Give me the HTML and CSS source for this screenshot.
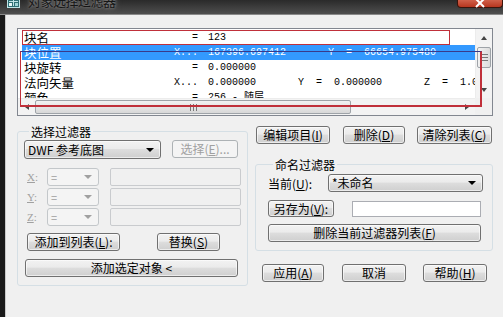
FILE: index.html
```html
<!DOCTYPE html>
<html lang="zh-CN">
<head>
  <meta charset="UTF-8">
  <title>对象选择过滤器</title>
  <link rel="stylesheet" href="styles.css">
</head>
<body>
  <div class="window">

    <!-- Title bar (cut off at the top of the shot) -->
    <header class="titlebar">
      <svg class="app-icon" width="13" height="13" viewBox="0 0 13 13">
        <rect x="0.5" y="0.5" width="12" height="12" fill="#2d6f74" stroke="#bfe3e6"/>
        <rect x="2" y="2" width="3" height="3" fill="#e8f6f7"/>
        <rect x="8" y="2" width="3" height="3" fill="#e8f6f7"/>
        <rect x="2" y="8" width="3" height="3" fill="#e8f6f7"/>
        <rect x="8" y="8" width="3" height="3" fill="#9fd3d6"/>
        <path d="M6.5 2v9M2 6.5h9" stroke="#bfe3e6" stroke-width="1"/>
      </svg>
      <span class="title">对象选择过滤器</span>
      <span class="close-btn">
        <svg width="12" height="10" viewBox="0 0 12 10"><path d="M2 0l8 8M10 0L2 8" stroke="#fff" stroke-width="2"/></svg>
      </span>
    </header>

    <div class="frame">
      <div class="frame-edge"></div>
      <div class="dialog">

        <!-- Filter list -->
        <div class="listbox">
          <div class="list-main">
            <div class="rows">
              <div class="row"><span class="c-name">块名</span><span class="c-op">=</span><span class="c-val">123</span></div>
              <div class="row selected"><span class="c-name">块位置</span><span class="c-op">X...</span><span class="c-val">167396.697412       Y  =  66654.975480</span></div>
              <div class="row"><span class="c-name">块旋转</span><span class="c-op">=</span><span class="c-val">0.000000</span></div>
              <div class="row"><span class="c-name">法向矢量</span><span class="c-op">X...</span><span class="c-val">0.000000       Y  =  0.000000       Z  =  1.000000</span></div>
              <div class="row"><span class="c-name">颜色</span><span class="c-op">=</span><span class="c-val">256 - 随层</span></div>
            </div>
            <div class="vscroll">
              <div class="sb-arrow"><span class="tri tri-up"></span></div>
              <div class="v-thumb"><span class="grip-h"></span></div>
              <div class="sb-fill"></div>
              <div class="sb-arrow"><span class="tri tri-down"></span></div>
            </div>
          </div>
          <div class="list-bottom">
            <div class="hscroll">
              <div class="sb-arrow-h"><span class="tri tri-left"></span></div>
              <div class="h-thumb"><span class="grip-v"></span></div>
              <div class="sb-fill"></div>
              <div class="sb-arrow-h"><span class="tri tri-right"></span></div>
            </div>
            <div class="sb-corner"></div>
          </div>
          <!-- red annotation boxes drawn over the screenshot -->
          <div class="mark mark-1"></div>
          <div class="mark mark-2"></div>
        </div>

        <div class="lower">

          <!-- Left: select filter -->
          <fieldset class="group group-select">
            <legend>选择过滤器</legend>
            <div class="sel-row">
              <div class="combo combo-dwf">DWF 参考底图<span class="arrow"></span></div>
              <button class="btn btn-pick" disabled>选择(<u>E</u>)...</button>
            </div>
            <div class="coord-row">
              <span class="coord-label"><u>X</u>:</span>
              <div class="combo-off">=<span class="arrow"></span></div>
              <div class="text-off"></div>
            </div>
            <div class="coord-row">
              <span class="coord-label"><u>Y</u>:</span>
              <div class="combo-off">=<span class="arrow"></span></div>
              <div class="text-off"></div>
            </div>
            <div class="coord-row">
              <span class="coord-label"><u>Z</u>:</span>
              <div class="combo-off">=<span class="arrow"></span></div>
              <div class="text-off"></div>
            </div>
            <div class="add-row">
              <button class="btn btn-add">添加到列表(<u>L</u>):</button>
              <button class="btn btn-replace">替换(<u>S</u>)</button>
            </div>
            <button class="btn btn-addsel">添加选定对象 &lt;</button>
          </fieldset>

          <!-- Right column -->
          <div class="right-col">
            <div class="edit-row">
              <button class="btn btn-edit">编辑项目(<u>I</u>)</button>
              <button class="btn btn-del">删除(<u>D</u>)</button>
              <button class="btn btn-clear">清除列表(<u>C</u>)</button>
            </div>

            <fieldset class="group group-named">
              <legend>命名过滤器</legend>
              <div class="cur-row">
                <span class="cur-label">当前(<u>U</u>):</span>
                <div class="combo combo-name">*未命名<span class="arrow"></span></div>
              </div>
              <div class="save-row">
                <button class="btn btn-save">另存为(<u>V</u>):</button>
                <div class="text-on"></div>
              </div>
              <button class="btn btn-delfilter">删除当前过滤器列表(<u>F</u>)</button>
            </fieldset>

            <div class="footer-row">
              <button class="btn btn-apply">应用(<u>A</u>)</button>
              <button class="btn btn-cancel">取消</button>
              <button class="btn btn-help">帮助(<u>H</u>)</button>
            </div>
          </div>
        </div>
      </div>
    </div>
  </div>
</body>
</html>
```

FILE: styles.css
```css
/* Base */
* {
  margin: 0;
  padding: 0;
  box-sizing: border-box;
}

body {
  width: 503px;
  height: 317px;
  overflow: hidden;
  background: #1d1d1d;
  font-family: "Noto Sans CJK SC", "Liberation Sans", sans-serif;
  font-size: 12px;
  color: #000;
}

u {
  text-decoration: underline;
  text-underline-offset: 1px;
}

.window {
  width: 503px;
  height: 317px;
  display: flex;
  flex-direction: column;
}

/* Title bar */
.titlebar {
  height: 15px;
  flex: none;
  display: flex;
  align-items: flex-start;
  background: linear-gradient(#2a2a2a, #4f4f4f);
  border-bottom: 1px solid #8a8a8a;
  position: relative;
  overflow: hidden;
}

.app-icon {
  margin: -5px 0 0 7px;
  flex: none;
}

.title {
  margin: -6px 0 0 8px;
  font-size: 13px;
  line-height: 14px;
  color: #161616;
  text-shadow: 0 0 3px #9a9a9a, 0 0 6px #777;
  letter-spacing: -0.5px;
}

.close-btn {
  margin-left: auto;
  width: 46px;
  height: 8px;
  display: flex;
  justify-content: center;
  align-items: flex-end;
  background: linear-gradient(#d0604a, #b8361f);
  border: 1px solid #3b140c;
  border-top: none;
  border-radius: 0 0 4px 4px;
}

.close-btn svg {
  display: block;
  margin-bottom: -2px;
}

/* Frame */
.frame {
  flex: 1;
  display: flex;
}

.frame-edge {
  width: 5px;
  background: #1a1a1a;
}

.dialog {
  flex: 1;
  background: #f0f0f0;
  border-left: 1px solid #c9c9c9;
  padding: 13px 10px 0 11px;
  position: relative;
}

/* List box */
.listbox {
  width: 476px;
  height: 88px;
  border: 1px solid #828790;
  background: #fff;
  position: relative;
}

.list-main {
  display: flex;
  height: 69px;
}

.rows {
  width: 457px;
  height: 69px;
  overflow: hidden;
  padding-top: 1px;
}

.row {
  height: 15px;
  margin-left: 4px;
  display: flex;
  align-items: center;
  white-space: pre;
  line-height: 15px;
}

.row.selected {
  background: #3399ff;
  color: #fff;
}

.c-name {
  width: 148px;
  padding-left: 2px;
  font-size: 12.5px;
  flex: none;
}

.c-op,
.c-val {
  font-family: "Liberation Mono", monospace;
  font-size: 10px;
}

.c-op {
  width: 28px;
  text-align: right;
  flex: none;
}

.c-val {
  margin-left: 10px;
}

/* Scrollbars */
.vscroll {
  width: 17px;
  height: 69px;
  display: flex;
  flex-direction: column;
  background: #f3f3f3;
  border-left: 1px solid #ececec;
}

.sb-arrow {
  height: 17px;
  display: flex;
  align-items: center;
  justify-content: center;
}

.sb-fill {
  flex: 1;
}

.v-thumb {
  height: 21px;
  margin: 1px 1px 0;
  border: 1px solid #9ea3a8;
  border-radius: 2px;
  background: linear-gradient(90deg, #f2f2f2, #dcdcdc);
  display: flex;
  align-items: center;
  justify-content: center;
}

.grip-h {
  width: 7px;
  height: 7px;
  background: repeating-linear-gradient(#777 0 1px, transparent 1px 3px);
}

.list-bottom {
  display: flex;
  height: 17px;
}

.hscroll {
  width: 457px;
  display: flex;
  background: #f3f3f3;
  border-top: 1px solid #ececec;
}

.sb-arrow-h {
  width: 17px;
  display: flex;
  align-items: center;
  justify-content: center;
}

.h-thumb {
  width: 316px;
  margin: 1px 0;
  border: 1px solid #9ea3a8;
  border-radius: 2px;
  background: linear-gradient(#f2f2f2, #d8d8d8);
  display: flex;
  align-items: center;
  justify-content: center;
}

.grip-v {
  width: 7px;
  height: 7px;
  background: repeating-linear-gradient(90deg, #777 0 1px, transparent 1px 3px);
}

.sb-corner {
  width: 17px;
  background: #f0f0f0;
}

.tri {
  width: 0;
  height: 0;
  border: 3px solid transparent;
}

.tri-up { border-bottom: 4px solid #444; border-top-width: 0; }
.tri-down { border-top: 4px solid #444; border-bottom-width: 0; }
.tri-left { border-right: 4px solid #444; border-left-width: 0; }
.tri-right { border-left: 4px solid #444; border-right-width: 0; }

/* Red annotation boxes */
.mark {
  position: absolute;
  border: 1px solid #c0303a;
  pointer-events: none;
}

.mark-1 {
  left: 4px;
  top: 1px;
  width: 428px;
  height: 15px;
}

.mark-2 {
  left: 2px;
  top: 22px;
  width: 462px;
  height: 56px;
  border-width: 1px 2px 2px 1px;
  border-color: #3a3a8a #c0303a #c0303a #c0303a;
}

/* Lower part */
.lower {
  display: flex;
  gap: 7px;
}

.group {
  border: 1px solid #d5dfe5;
  border-radius: 3px;
  min-width: 0;
}

.group legend {
  line-height: 15px;
  padding: 0 2px;
  margin-left: 5px;
}

.group-select {
  width: 231px;
  margin-top: 8px;
  height: 162px;
  padding: 1px 0 0 6px;
}

.sel-row {
  display: flex;
  gap: 11px;
}

/* Buttons and combo boxes, Win7 look */
.btn,
.combo {
  height: 18px;
  border: 1px solid #707070;
  border-radius: 3px;
  background: linear-gradient(#f2f2f2 0%, #ebebeb 45%, #dddddd 50%, #cfcfcf 100%);
  font-family: "Noto Sans CJK SC", "Liberation Sans", sans-serif;
  font-size: 12px;
  line-height: 16px;
  color: #000;
  white-space: nowrap;
  box-shadow: inset 0 0 0 1px rgba(255, 255, 255, 0.6);
}

.btn:disabled {
  border-color: #adb2b5;
  background: #f4f4f4;
  color: #a0a0a0;
  box-shadow: none;
}

.combo {
  display: flex;
  align-items: center;
  padding-left: 3px;
  position: relative;
}

.arrow {
  margin-left: auto;
  margin-right: 6px;
  width: 0;
  height: 0;
  border-left: 4px solid transparent;
  border-right: 4px solid transparent;
  border-top: 4px solid #000;
}

.combo-dwf {
  width: 137px;
  height: 19px;
}

.btn-pick {
  width: 66px;
}

.coord-row {
  display: flex;
  align-items: center;
  height: 18px;
  margin-top: 2px;
}

.sel-row + .coord-row {
  margin-top: 9px;
}

.coord-label {
  width: 23px;
  padding-left: 3px;
  color: #a0a0a0;
  font-family: "Liberation Serif", serif;
  font-size: 11px;
}

.combo-off {
  width: 52px;
  height: 18px;
  border: 1px solid #c3c7ca;
  border-radius: 3px;
  background: #f4f4f4;
  color: #a0a0a0;
  display: flex;
  align-items: center;
  padding-left: 3px;
  font-size: 11px;
}

.combo-off .arrow {
  border-top-color: #a0a0a0;
  margin-right: 6px;
}

.text-off {
  width: 131px;
  height: 18px;
  margin-left: 11px;
  border: 1px solid #c9cbce;
  border-radius: 2px;
  background: #f0f0f0;
}

.add-row {
  display: flex;
  gap: 37px;
  margin: 7px 0 0 3px;
}

.btn-add { width: 93px; }
.btn-replace { width: 63px; }

.btn-addsel {
  display: block;
  width: 213px;
  margin: 8px 0 0 1px;
}

/* Right column */
.right-col {
  width: 238px;
}

.edit-row {
  display: flex;
  margin: 10px 0 0 1px;
  gap: 13px;
}

.btn-edit { width: 74px; }
.btn-del { width: 62px; }
.btn-clear { width: 75px; margin-left: -1px; }

.group-named {
  margin-top: 13px;
  height: 94px;
  padding: 1px 0 0 12px;
}

.cur-row {
  display: flex;
  align-items: center;
  margin-top: 1px;
}

.cur-label {
  width: 60px;
}

.combo-name {
  width: 155px;
}

.save-row {
  display: flex;
  align-items: center;
  margin-top: 8px;
}

.btn-save {
  width: 66px;
  height: 17px;
  line-height: 15px;
}

.text-on {
  width: 129px;
  height: 16px;
  margin-left: 18px;
  border: 1px solid #abadb3;
  background: #fff;
}

.btn-delfilter {
  display: block;
  width: 213px;
  margin-top: 7px;
}

.footer-row {
  display: flex;
  margin: 13px 0 0 7px;
  gap: 18px;
}

.btn-apply { width: 62px; }
.btn-cancel { width: 64px; }
.btn-help { width: 64px; margin-left: -1px; }
```
